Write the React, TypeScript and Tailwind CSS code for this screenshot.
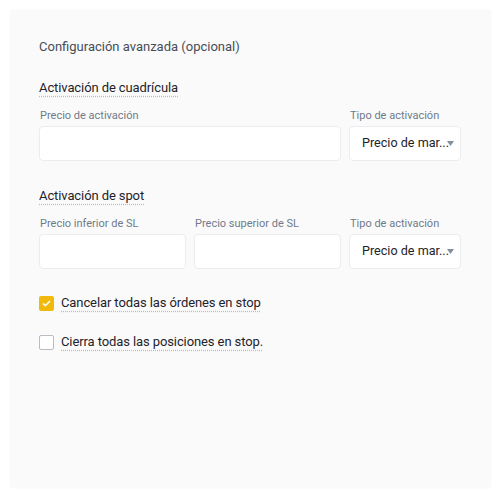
import type { ReactNode } from "react";

const font = { fontFamily: 'Roboto, Lato, "Noto Sans", Arial, sans-serif' };

function Label({ children }: { children: ReactNode }) {
  return <div className="h-4 pl-px text-[11px] leading-4 text-[#707a8a]">{children}</div>;
}

function Field({ label, className }: { label: string; className?: string }) {
  return (
    <div className={className}>
      <Label>{label}</Label>
      <div className="mt-[2px] h-[35px] rounded-[4px] border border-[#eaecef] bg-white" />
    </div>
  );
}

function TriggerSelect() {
  return (
    <div className="w-[112px] shrink-0">
      <Label>Tipo de activación</Label>
      <div className="relative mt-[2px] flex h-[35px] items-center rounded-[4px] border border-[#eaecef] bg-white pl-3 text-[12.6px] text-[#1e2329]">
        <span className="whitespace-nowrap">Precio de mar...</span>
        <svg className="absolute left-[97px] top-[14px]" width="7" height="5" viewBox="0 0 7 5">
          <path d="M0 0h7L3.5 5z" fill="#848e9c" />
        </svg>
      </div>
    </div>
  );
}

function Heading({ children }: { children: ReactNode }) {
  return (
    <div className="h-5 text-[13px] leading-5 tracking-[-0.1px] text-[#1e2329]">
      <span className="underline decoration-dotted decoration-[#b7bdc6] underline-offset-[4px]">{children}</span>
    </div>
  );
}

function Check({ checked, label }: { checked: boolean; label: string }) {
  return (
    <div className="flex h-5 items-center gap-[7px] text-[13px] tracking-[-0.1px] text-[#1e2329]">
      {checked ? (
        <span className="flex h-[15px] w-[15px] items-center justify-center rounded-[2px] bg-[#f0b90b]">
          <svg width="9" height="7" viewBox="0 0 9 7">
            <path d="M1 3.5l2.3 2.2L8 1" fill="none" stroke="#fff" strokeWidth="1.6" />
          </svg>
        </span>
      ) : (
        <span className="h-[15px] w-[15px] rounded-[2px] border border-[#b7bdc6] bg-white" />
      )}
      <span className="underline decoration-dotted decoration-[#b7bdc6] underline-offset-[4px]">{label}</span>
    </div>
  );
}

export default function App() {
  return (
    <div className="h-[494px] w-[500px] bg-white p-[10px]" style={font}>
      <div className="h-[478px] w-[481px] rounded-[4px] bg-[#fafafa] px-[29px] pt-[28px] shadow-[0_0_2px_rgba(0,0,0,0.06)]">
        <div className="h-[18px] text-[13px] leading-[18px] text-[#474d57]">Configuración avanzada (opcional)</div>

        <div className="mt-[22px]">
          <Heading>Activación de cuadrícula</Heading>
        </div>
        <div className="mt-[10px] flex w-[422px] gap-2">
          <Field label="Precio de activación" className="flex-1" />
          <TriggerSelect />
        </div>

        <div className="mt-[25px]">
          <Heading>Activación de spot</Heading>
        </div>
        <div className="mt-[10px] flex w-[422px] gap-2">
          <Field label="Precio inferior de SL" className="flex-1" />
          <Field label="Precio superior de SL" className="flex-1" />
          <TriggerSelect />
        </div>

        <div className="mt-[24px]">
          <Check checked label="Cancelar todas las órdenes en stop" />
        </div>
        <div className="mt-[19px]">
          <Check checked={false} label="Cierra todas las posiciones en stop." />
        </div>
      </div>
    </div>
  );
}
